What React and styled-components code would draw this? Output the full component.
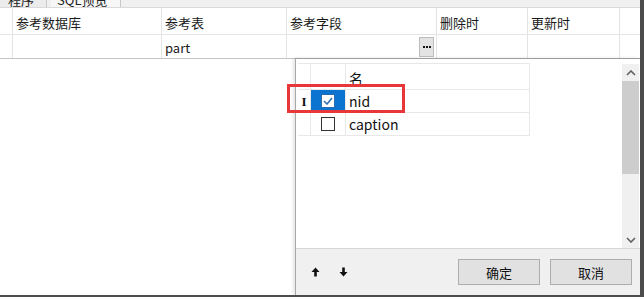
import React from 'react';
import styled, { createGlobalStyle } from 'styled-components';

const GlobalStyle = createGlobalStyle`
  html, body {
    margin: 0;
    padding: 0;
    background: #ffffff;
  }
  body {
    font-family: "Noto Sans CJK SC", "Noto Sans", sans-serif;
  }
`;

const Screen = styled.div`
  position: relative;
  width: 640px;
  height: 295px;
  background: #ffffff;
  border-right: 4px solid #4c4c4c;
  border-bottom: 2px solid #4c4c4c;
  overflow: hidden;
  display: flex;
  flex-direction: column;
  font-size: 13px;
  color: #1a1a1a;
`;

const TabStrip = styled.div`
  height: 7px;
  flex: none;
  display: flex;
  align-items: flex-end;
  background: #f0f0f0;
  border-bottom: 1px solid #dadada;
  overflow: hidden;
`;

const Tab = styled.div`
  height: 7px;
  width: ${p => p.$w}px;
  padding-left: ${p => p.$pad}px;
  box-sizing: border-box;
  border-right: 1px solid #c8c8c8;
  background: ${p => (p.$active ? '#f7f7f7' : '#ececec')};
  overflow: hidden;
  font-size: 13px;
  line-height: 0px;
  color: #222;
  margin-right: 4px;
`;

const Row = styled.div`
  display: flex;
  height: ${p => p.$h}px;
  flex: none;
  border-bottom: 1px solid ${p => p.$line || '#e4e4e4'};
`;

const Cell = styled.div`
  width: ${p => p.$w}px;
  flex: none;
  box-sizing: border-box;
  border-right: 1px solid #e4e4e4;
  padding-left: 3px;
  padding-top: ${p => p.$pt || 0}px;
  display: flex;
  align-items: center;
  justify-content: space-between;
  position: relative;
`;

const EllipsisButton = styled.div`
  width: 15px;
  height: 20px;
  margin-right: 2px;
  box-sizing: border-box;
  background: #e3e3e3;
  border: 1px solid #bdbdbd;
  display: flex;
  align-items: center;
  justify-content: center;
  gap: 1px;
`;

const Dot = styled.span`
  width: 2px;
  height: 2px;
  background: #111;
`;

const Popup = styled.div`
  position: absolute;
  left: 295px;
  top: 58px;
  width: 345px;
  bottom: 0;
  box-sizing: border-box;
  border-left: 1px solid #a8a8a8;
  border-top: 1px solid #9e9e9e;
  background: #ffffff;
  box-shadow: -2px 0 3px rgba(0, 0, 0, 0.1);
  display: flex;
  flex-direction: column;
`;

const ListArea = styled.div`
  flex: 1;
  display: flex;
  justify-content: space-between;
  padding: 4px 1px 0 2px;
  border-bottom: 1px solid #d6d6d6;
`;

const List = styled.div`
  width: 232px;
  align-self: flex-start;
  font-size: 14px;
  border-top: 1px solid #e8e8e8;
`;

const ListRow = styled.div`
  display: flex;
  height: ${p => p.$h}px;
  border-bottom: 1px solid #e8e8e8;
`;

const ListCell = styled.div`
  width: ${p => p.$w}px;
  flex: none;
  box-sizing: border-box;
  border-right: 1px solid #e8e8e8;
  display: flex;
  align-items: ${p => p.$align || 'center'};
  justify-content: ${p => p.$justify || 'flex-start'};
  padding-left: ${p => p.$pad || 0}px;
  padding-bottom: ${p => p.$pb || 0}px;
  background: ${p => (p.$selected ? '#0a74d0' : 'transparent')};
  color: #111;
`;

const Indicator = styled.span`
  font-family: "Liberation Serif", serif;
  font-weight: bold;
  font-size: 13px;
  line-height: 1;
  margin-top: 1px;
`;

const CheckBox = styled.div`
  width: 14px;
  height: 14px;
  box-sizing: border-box;
  margin-left: 10px;
  background: #ffffff;
  border: 1px solid ${p => (p.$checked ? '#2a6fb0' : '#333333')};
  display: flex;
  align-items: center;
  justify-content: center;
`;

const ScrollBar = styled.div`
  width: 17px;
  height: 184px;
  margin-top: 1px;
  background: #f0f0f0;
  display: flex;
  flex-direction: column;
  align-items: center;
`;

const ScrollArrow = styled.div`
  height: 17px;
  width: 17px;
  display: flex;
  align-items: center;
  justify-content: center;
  flex: none;
`;

const Thumb = styled.div`
  width: 17px;
  height: 93px;
  background: #cdcdcd;
  flex: none;
`;

const Track = styled.div`
  flex: 1;
`;

const Footer = styled.div`
  height: 46px;
  flex: none;
  background: #f0f0f0;
  display: flex;
  align-items: flex-start;
  padding: 10px 8px 0 15px;
`;

const MoveButtons = styled.div`
  display: flex;
  gap: 19px;
  margin-top: 8px;
  flex: 1;
`;

const Button = styled.div`
  width: 82px;
  height: 26px;
  box-sizing: border-box;
  margin-left: ${p => p.$ml || 0}px;
  background: #e1e1e1;
  border: 1px solid #adadad;
  display: flex;
  align-items: center;
  justify-content: center;
  font-size: 13px;
  color: #111;
`;

const Highlight = styled.div`
  position: absolute;
  left: 287px;
  top: 84px;
  width: 118px;
  height: 29px;
  box-sizing: border-box;
  border: 3px solid #e8373a;
  pointer-events: none;
`;

const ArrowUp = () => (
  <svg width="9" height="10" viewBox="0 0 9 10">
    <path d="M4.5 0.5 L8.5 5 L5.8 5 L5.8 9.5 L3.2 9.5 L3.2 5 L0.5 5 Z" fill="#111" />
  </svg>
);

const ArrowDown = () => (
  <svg width="9" height="10" viewBox="0 0 9 10">
    <path d="M4.5 9.5 L8.5 5 L5.8 5 L5.8 0.5 L3.2 0.5 L3.2 5 L0.5 5 Z" fill="#111" />
  </svg>
);

const Chevron = ({ down }) => (
  <svg width="10" height="6" viewBox="0 0 10 6">
    <path
      d={down ? 'M1 1 L5 5 L9 1' : 'M1 5 L5 1 L9 5'}
      fill="none"
      stroke="#606060"
      strokeWidth="1.6"
    />
  </svg>
);

const Check = () => (
  <svg width="10" height="8" viewBox="0 0 10 8">
    <path d="M1 4 L4 7 L9 1" fill="none" stroke="#2f6fae" strokeWidth="1.5" />
  </svg>
);

const columns = [
  { w: 13, label: '' },
  { w: 149, label: '参考数据库' },
  { w: 125, label: '参考表' },
  { w: 150, label: '参考字段' },
  { w: 91, label: '删除时' },
  { w: 92, label: '更新时' },
];

export default function App() {
  return (
    <>
      <GlobalStyle />
      <Screen>
        <TabStrip>
          <Tab $w={47} $pad={8}>程序</Tab>
          <Tab $w={70} $pad={6} $active>SQL预览</Tab>
        </TabStrip>

        <Row $h={26}>
          {columns.map((c, i) => (
            <Cell key={i} $w={c.w} $pt={3}>{c.label}</Cell>
          ))}
        </Row>
        <Row $h={23} $line="#c4c4c4">
          <Cell $w={13} />
          <Cell $w={149} />
          <Cell $w={125} $pt={1}>part</Cell>
          <Cell $w={150}>
            <span />
            <EllipsisButton>
              <Dot />
              <Dot />
              <Dot />
            </EllipsisButton>
          </Cell>
          <Cell $w={91} />
          <Cell $w={92} />
        </Row>

        <Popup>
          <ListArea>
            <List>
              <ListRow $h={25}>
                <ListCell $w={13} />
                <ListCell $w={35} />
                <ListCell $w={184} $pad={3} $align="flex-end" $pb={1}>名</ListCell>
              </ListRow>
              <ListRow $h={22}>
                <ListCell $w={13} $justify="center">
                  <Indicator>I</Indicator>
                </ListCell>
                <ListCell $w={35} $selected>
                  <CheckBox $checked>
                    <Check />
                  </CheckBox>
                </ListCell>
                <ListCell $w={184} $pad={3}>nid</ListCell>
              </ListRow>
              <ListRow $h={22}>
                <ListCell $w={13} />
                <ListCell $w={35}>
                  <CheckBox />
                </ListCell>
                <ListCell $w={184} $pad={3}>caption</ListCell>
              </ListRow>
            </List>

            <ScrollBar>
              <ScrollArrow>
                <Chevron />
              </ScrollArrow>
              <Thumb />
              <Track />
              <ScrollArrow>
                <Chevron down />
              </ScrollArrow>
            </ScrollBar>
          </ListArea>

          <Footer>
            <MoveButtons>
              <ArrowUp />
              <ArrowDown />
            </MoveButtons>
            <Button>确定</Button>
            <Button $ml={10}>取消</Button>
          </Footer>
        </Popup>

        <Highlight />
      </Screen>
    </>
  );
}
